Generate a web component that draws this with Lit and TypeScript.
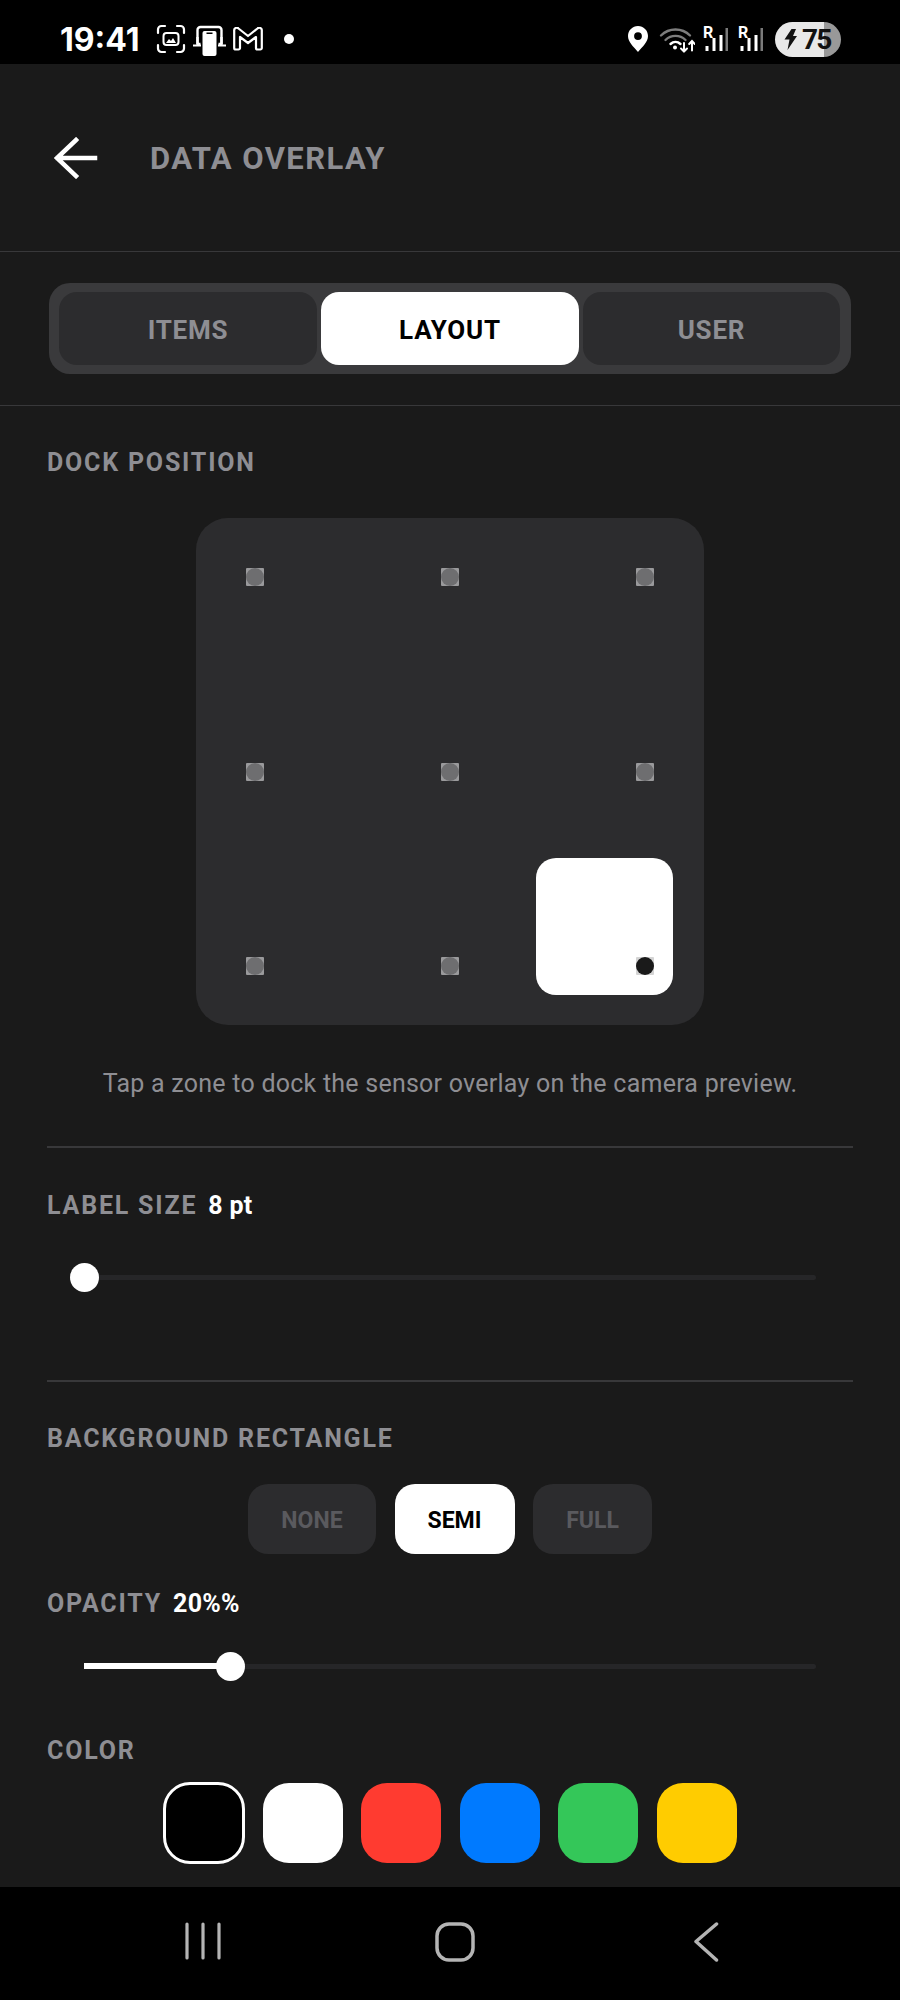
import { LitElement, html, css } from "lit";
import { customElement } from "lit/decorators.js";

const iconScan = html`<svg class="i" style="width:30px;height:30px" viewBox="0 0 30 30" fill="none" stroke="#fff" stroke-width="2.2" stroke-linecap="round">
  <path d="M2 9V5.5A3.5 3.5 0 0 1 5.5 2H9M21 2h3.5A3.5 3.5 0 0 1 28 5.5V9M28 21v3.5a3.5 3.5 0 0 1-3.5 3.5H21M9 28H5.5A3.5 3.5 0 0 1 2 24.5V21"/>
  <rect x="7.5" y="9" width="15" height="12" rx="3" stroke-width="2"/>
  <path d="M10 19l3-4 2 2 2-3 3 5z" fill="#fff" stroke="none"/>
</svg>`;

const iconCast = html`<svg class="i" style="width:33px;height:31px" viewBox="0 0 33 31" fill="none">
  <path d="M4.5 19V5a3 3 0 0 1 3-3h18a3 3 0 0 1 3 3v14" stroke="#fff" stroke-width="2.4"/>
  <path d="M4.5 12v7h3M28.500 12v7h-3" stroke="#fff" stroke-width="2.4"/>
  <path d="M0 20.5h8M25 20.5h8" stroke="#fff" stroke-width="2"/>
  <rect x="8" y="4.5" width="17" height="26.5" rx="2.5" fill="#000"/>
  <rect x="9.5" y="6" width="14" height="25" rx="2" fill="#fff"/>
  <rect x="13.5" y="7.5" width="6" height="1.5" fill="#000"/>
</svg>`;

const iconMail = html`<svg class="i" style="width:30px;height:24px" viewBox="0 0 30 24" fill="none" stroke="#fff" stroke-width="2.2" stroke-linejoin="round">
  <path d="M1.200 3.500A2.500 2.500 0 0 1 5.500 1.500L15 9l9.500-7.500A2.500 2.500 0 0 1 28.800 3.500V21a1.500 1.500 0 0 1-1.500 1.500H24.500A1.500 1.500 0 0 1 23 21V10L15 16 7 10v11A1.500 1.500 0 0 1 5.500 22.500H2.700A1.500 1.500 0 0 1 1.200 21z"/>
</svg>`;

const iconPin = html`<svg class="i" style="width:20px;height:26px" viewBox="0 0 20 26">
  <path fill="#fff" fill-rule="evenodd" d="M10 0C4.5 0 0 4.400 0 9.900c0 6 5.500 10.600 10 16 4.500-5.400 10-10 10-16C20 4.400 15.500 0 10 0zm0 6.200a3.900 3.900 0 1 1 0 7.800 3.900 3.900 0 0 1 0-7.800z"/>
</svg>`;

const iconWifi = html`<svg class="i" style="width:37px;height:27px" viewBox="0 0 37 27" fill="none" stroke-linecap="round">
  <path d="M3 9.500C11 1.500 24 1.500 32 9.500" stroke="#7d7d7d" stroke-width="2.4"/>
  <path d="M7.500 14C13 8.500 22 8.500 27.500 14" stroke="#7d7d7d" stroke-width="2.4"/>
  <path d="M12.500 18c3-2.800 7-2.800 10 0" stroke="#fff" stroke-width="2.4"/>
  <circle cx="17" cy="21.500" r="2" fill="#fff"/>
  <path d="M26 17v8.500M23 22.500l3 3 3-3" stroke="#fff" stroke-width="2"/>
  <path d="M34 24.500v-9M31.200 18l2.800-3 2.800 3" stroke="#fff" stroke-width="2"/>
</svg>`;

const signalBars = html`<svg class="i sig" viewBox="0 0 26 26">
  <rect x="3.5" y="20" width="3" height="5" fill="#fff"/>
  <rect x="10.5" y="12" width="3" height="13" fill="#fff"/>
  <rect x="17.5" y="9" width="3" height="16" fill="#fff"/>
  <rect x="23.5" y="2" width="2.5" height="23" fill="#7a7a7a"/>
</svg>`;

const iconBolt = html`<svg class="i" style="width:13px;height:21px" viewBox="0 0 13 21">
  <path fill="#111" d="M7.500 0H12L9 7h4L3.500 21 5.500 10.500H0.500z"/>
</svg>`;

@customElement("app-root")
export class AppRoot extends LitElement {
  static styles = css`
    :host {
      display: block;
      width: 900px;
      height: 2000px;
      background: #1a1a1a;
      font-family: Roboto, "Liberation Sans", sans-serif;
      color: #fff;
    }
    .page { height: 2000px; display: flex; flex-direction: column; overflow: hidden; }
    .status {
      height: 64px; flex: none; box-sizing: border-box; background: #000; display: flex; align-items: center;
      padding: 14px 59px 0 60px; justify-content: space-between;
    }
    .i { display: block; flex: none; }
    .sl { display: flex; align-items: center; }
    .time { font-size: 32px; font-weight: 700; width: 96px; font-family: Inter, Roboto, sans-serif; }
    .cast { margin-left: 7px; margin-top: 2px; }
    .mail { margin-left: 7px; }
    .notif { width: 10px; height: 10px; border-radius: 50%; background: #fff; margin-left: 21px; }
    .sr { display: flex; align-items: center; }
    .wifi { margin-left: 10px; }
    .signal { position: relative; width: 26px; height: 26px; }
    .sig { width: 26px; height: 26px; }
    .r { position: absolute; left: 1px; top: 0; font-size: 16px; line-height: 14px; font-weight: 700; color: #fff; }
    .s1 { margin-left: 7px; }
    .s2 { margin-left: 9px; }
    .batt {
      width: 66px; height: 35px; border-radius: 18px; margin-left: 12px;
      background: linear-gradient(90deg, #e8e8e8 0 49px, #999 49px);
      display: flex; align-items: center; padding-left: 9px; box-sizing: border-box; gap: 5px;
      color: #111; font-size: 28px; font-weight: 700; letter-spacing: -1.8px;
    }

    .head {
      height: 188px; flex: none; box-sizing: border-box; border-bottom: 1.5px solid #38383a;
      display: flex; align-items: center; padding: 0 0 0 54px;
    }
    .title { margin: 2px 0 0 52px; font-size: 31px; font-weight: 700; letter-spacing: 1.45px; color: #8e8e93; }

    .seg-wrap {
      height: 154px; flex: none; box-sizing: border-box; border-bottom: 1.5px solid #38383a;
      padding: 31px 49px 0;
    }
    .seg {
      height: 91px; box-sizing: border-box; padding: 9px 10px; background: #3a3a3c; border-radius: 21px;
      display: grid; grid-template-columns: 258px 258px 257px; column-gap: 4px;
    }
    .seg div {
      display: flex; align-items: center; justify-content: center; border-radius: 18px; padding-top: 2px; box-sizing: border-box;
      background: #2c2c2e; color: #8e8e93; font-size: 26px; font-weight: 700; letter-spacing: 0.8px;
    }
    .seg div.on { background: #fff; color: #000; }

    .body { flex: 1; min-height: 0; padding: 0 47px; overflow: hidden; }
    .label {
      font-size: 25px; line-height: 30px; margin-bottom: -2px; font-weight: 700; letter-spacing: 1.8px; color: #8e8e93;
      display: flex; align-items: baseline; gap: 11px;
    }
    .label b { color: #fff; font-weight: 700; font-size: 25px; letter-spacing: 0.3px; }
    .l-dock { margin-top: 42px; }

    .dock {
      position: relative; width: 508px; height: 507px; margin: 42px auto 0; background: #2c2c2e; border-radius: 32px;
      display: grid; grid-template-columns: repeat(3, 18px); grid-template-rows: repeat(3, 18px);
      justify-content: space-between; align-content: space-between; padding: 50px; box-sizing: border-box;
    }
    .hl { position: absolute; left: 340px; top: 340px; width: 137px; height: 137px; background: #fff; border-radius: 20px; }
    .pt { position: relative; width: 18px; height: 18px; background: #9a9a9c; border-radius: 1px; display: flex; }
    .pt::after { content: ""; flex: 1; background: #6e6e70; border-radius: 50%; }
    .pt.on { background: #d4d4d4; }
    .pt.on::after { background: #1a1a1a; }
    .cap {
      margin: 43px 0 -2px; text-align: center; font-size: 25px; line-height: 32px; color: #8e8e93; letter-spacing: 0.24px;
    }
    .rule { height: 1.5px; background: #38383a; }
    .r1 { margin-top: 48px; }
    .l-size { margin-top: 43.5px; }
    .slider { position: relative; height: 30px; margin: 0 37px; display: flex; align-items: center; }
    .track { flex: 1; height: 5px; background: #262628; border-radius: 3px; }
    .fill { position: absolute; left: 0; top: 12px; height: 6px; background: #fff; }
    .thumb { position: absolute; top: 0.5px; width: 29px; height: 29px; margin-left: -14.5px; border-radius: 50%; background: #fff; }
    .s-size { margin-top: 43px; }
    .r2 { margin-top: 88px; }
    .l-bg { margin-top: 42.5px; }
    .opts { display: flex; justify-content: center; gap: 18.5px; margin: 32px 0 0 0; }
    .opts div {
      height: 70px; box-sizing: border-box; padding-top: 2px; display: flex; align-items: center; justify-content: center; border-radius: 20px;
      background: #2c2c2e; color: #5a5a5e; font-size: 23px; font-weight: 700;
    }
    .opts div.on { background: #fff; color: #000; }
    .l-op { margin-top: 34.5px; }
    .s-op { margin-top: 34.5px; }
    .l-col { margin-top: 55px; }
    .swatches { display: flex; justify-content: center; gap: 18.5px; margin: 18px 0 0 0; align-items: center; }
    .sw { width: 80px; height: 80px; border-radius: 26px; flex: none; }
    .sw.sel { width: 82px; height: 82px; box-sizing: border-box; border: 3px solid #fff; border-radius: 27px; margin-right: -1px; }

    .nav {
      height: 113px; flex: none; background: #000; position: relative;
      display: grid; grid-template-columns: repeat(3, 1fr); align-items: start; padding-top: 35px; box-sizing: border-box;
    }
    .nav .c { display: flex; }
    .n1 { margin-left: 185px; }
    .n2 { margin-left: 135px; }
    .n3 { margin-left: 94px; }
  `;

  private dot(on = false) {
    return html`<div class="pt ${on ? "on" : ""}"></div>`;
  }

  render() {
    const dots = [0, 1, 2, 3, 4, 5, 6, 7, 8];
    const colours = ["#000000", "#ffffff", "#ff3b30", "#007aff", "#34c759", "#ffcc00"];
    return html`<div class="page">
      <div class="status">
        <div class="sl">
          <span class="time">19:41</span>
          ${iconScan}
          <span class="cast">${iconCast}</span>
          <span class="mail">${iconMail}</span>
          <span class="notif"></span>
        </div>
        <div class="sr">
          ${iconPin}
          <span class="wifi">${iconWifi}</span>
          <span class="signal s1">${signalBars}<span class="r">R</span></span>
          <span class="signal s2">${signalBars}<span class="r">R</span></span>
          <div class="batt">${iconBolt}<span>75</span></div>
        </div>
      </div>

      <div class="head">
        <svg class="i" width="44" height="42" viewBox="0 0 44 42" fill="none" stroke="#fff" stroke-width="4.5" stroke-linecap="square" stroke-linejoin="miter">
          <path d="M41 21H4M22 3L3 21l19 18"/>
        </svg>
        <span class="title">DATA OVERLAY</span>
      </div>

      <div class="seg-wrap">
        <div class="seg"><div>ITEMS</div><div class="on">LAYOUT</div><div>USER</div></div>
      </div>

      <div class="body">
        <div class="label l-dock">DOCK POSITION</div>
        <div class="dock">
          <div class="hl"></div>
          ${dots.map((d) => this.dot(d === 8))}
        </div>
        <div class="cap">Tap a zone to dock the sensor overlay on the camera preview.</div>
        <div class="rule r1"></div>

        <div class="label l-size">LABEL SIZE <b>8 pt</b></div>
        <div class="slider s-size"><div class="track"></div><div class="thumb" style="left:0"></div></div>
        <div class="rule r2"></div>

        <div class="label l-bg">BACKGROUND RECTANGLE</div>
        <div class="opts">
          <div style="width:128px">NONE</div>
          <div class="on" style="width:120px">SEMI</div>
          <div style="width:119px">FULL</div>
        </div>
        <div class="label l-op">OPACITY <b>20%%</b></div>
        <div class="slider s-op">
          <div class="track"></div>
          <div class="fill" style="width:146px"></div>
          <div class="thumb" style="left:146px"></div>
        </div>
        <div class="label l-col">COLOR</div>
        <div class="swatches">
          ${colours.map((c, i) => html`<div class="sw ${i === 0 ? "sel" : ""}" style="background:${c}"></div>`)}
        </div>
      </div>

      <div class="nav">
        <div class="c"><svg class="n1" width="36" height="38" viewBox="0 0 36 38" stroke="#b4b4b4" stroke-width="3.2" stroke-linecap="round"><path d="M2 2v34M18 2v34M34 2v34"/></svg></div>
        <div class="c"><svg class="n2" width="40" height="40" viewBox="0 0 40 40" fill="none" stroke="#b4b4b4" stroke-width="3.5"><rect x="2" y="2" width="36" height="36" rx="12"/></svg></div>
        <div class="c"><svg class="n3" width="26" height="40" viewBox="0 0 26 40" fill="none" stroke="#b4b4b4" stroke-width="3.5" stroke-linecap="round" stroke-linejoin="round"><path d="M22.5 2L2 19.5 22.5 38"/></svg></div>
      </div>
    </div>`;
  }
}
